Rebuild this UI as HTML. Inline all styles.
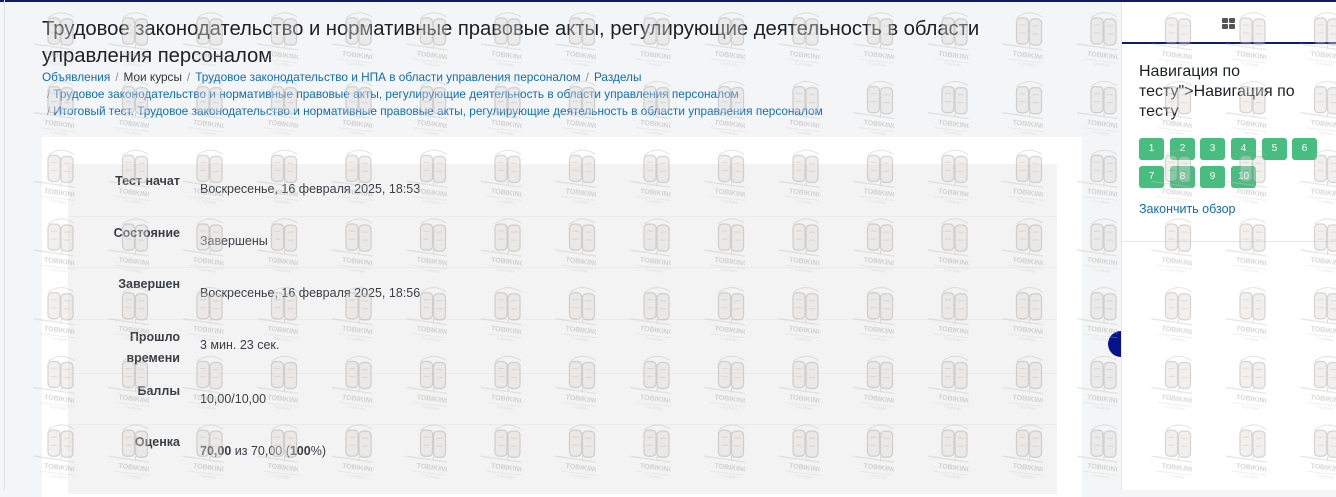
<!DOCTYPE html>
<html><head><meta charset="utf-8">
<style>
*{margin:0;padding:0;box-sizing:border-box}
body{width:1336px;height:490px;overflow:hidden;background:#f4f5f6;font-family:"Liberation Sans","DejaVu Sans",sans-serif;color:#1d2125;position:relative}
.topline{position:absolute;left:0;top:0;width:1336px;height:2px;background:#0f1c6e}
.leftline{position:absolute;left:4px;top:0;width:1px;height:490px;background:#d8e2f0}
h1{position:absolute;left:42px;top:16px;width:1000px;font-size:20.3px;font-weight:normal;line-height:27px;color:#1d2125;letter-spacing:-0.05px}
.bc{position:absolute;left:42px;font-size:11.8px;color:#0f6cbf;white-space:nowrap}
.bc .s{color:#8a8f94;margin:0 5px}
.bc .k{color:#333}
.card{position:absolute;left:42px;top:137px;width:1040px;height:360px;background:#fff}
.inner{position:absolute;left:68px;top:164px;width:989px;height:330px;background:#f3f3f3}
.row{position:absolute;left:68px;width:989px;height:52px;border-top:1px solid #ebebeb}
.lab{position:absolute;width:180px;text-align:right;font-size:12.5px;font-weight:bold;color:#3a3f44;line-height:21px}
.val{position:absolute;left:200px;font-size:12.5px;color:#3a3f44}
.drawer{position:absolute;left:1121px;top:2px;width:215px;height:488px;background:#fff;border-left:1px solid #e3e6ea}
.tabline{position:absolute;left:0;top:40px;width:215px;height:2px;background:#0f1c6e}
.nav{position:absolute;left:17px;top:60px;font-size:16px;line-height:20px;color:#1d2125;width:190px}
.btn{position:absolute;width:25px;height:22px;background:#47bd80;border-radius:3px;color:#fff;font-size:10px;text-align:center;line-height:22px}
.fin{position:absolute;left:17px;top:200px;font-size:12.5px;color:#0f6cbf}
.hr{position:absolute;left:0;top:239px;width:215px;height:1px;background:#e3e6ea}
.circ{position:absolute;left:1108px;top:331px;width:26px;height:26px;border-radius:50%;background:#05148c}
svg.wm{position:absolute;left:0;top:0;pointer-events:none}
</style></head><body>
<div class="topline"></div>
<div class="leftline"></div>
<h1>Трудовое законодательство и нормативные правовые акты, регулирующие деятельность в области управления персоналом</h1>
<div class="bc" style="top:70px">Объявления<span class="s">/</span><span class="k">Мои курсы</span><span class="s">/</span>Трудовое законодательство и НПА в области управления персоналом<span class="s">/</span>Разделы</div>
<div class="bc" style="top:87px;left:47px"><span class="s" style="margin:0 3px 0 0">/</span>Трудовое законодательство и нормативные правовые акты, регулирующие деятельность в области управления персоналом</div>
<div class="bc" style="top:104px;left:47px"><span class="s" style="margin:0 3px 0 0">/</span>Итоговый тест. Трудовое законодательство и нормативные правовые акты, регулирующие деятельность в области управления персоналом</div>

<div class="card"></div>
<div class="inner"></div>
<div class="row" style="top:164px;border-top:none"></div>
<div class="row" style="top:216px"></div>
<div class="row" style="top:267px"></div>
<div class="row" style="top:319px"></div>
<div class="row" style="top:373px"></div>
<div class="row" style="top:424px"></div>

<div class="lab" style="top:171px">Тест начат</div><div class="val" style="top:182px">Воскресенье, 16 февраля 2025, 18:53</div>
<div class="lab" style="top:223px">Состояние</div><div class="val" style="top:234px">Завершены</div>
<div class="lab" style="top:274px">Завершен</div><div class="val" style="top:286px">Воскресенье, 16 февраля 2025, 18:56</div>
<div class="lab" style="top:327px">Прошло<br>времени</div><div class="val" style="top:338px">3 мин. 23 сек.</div>
<div class="lab" style="top:381px">Баллы</div><div class="val" style="top:392px">10,00/10,00</div>
<div class="lab" style="top:432px">Оценка</div><div class="val" style="top:444px"><b>70,00</b> из 70,00 (<b>100</b>%)</div>

<div class="circ"></div>
<div class="drawer">
<svg style="position:absolute;left:100px;top:16px" width="13" height="11"><rect x="0" y="0" width="6" height="5" rx="1" fill="#555"/><rect x="7" y="0" width="6" height="5" rx="1" fill="#555"/><rect x="0" y="6" width="6" height="5" rx="1" fill="#555"/><rect x="7" y="6" width="6" height="5" rx="1" fill="#555"/></svg>
<div class="tabline"></div>
<div class="nav">Навигация по тесту"&gt;Навигация по тесту</div>
<div class="btn" style="left:17px;top:136px">1</div>
<div class="btn" style="left:48px;top:136px">2</div>
<div class="btn" style="left:78px;top:136px">3</div>
<div class="btn" style="left:109px;top:136px">4</div>
<div class="btn" style="left:140px;top:136px">5</div>
<div class="btn" style="left:170px;top:136px">6</div>
<div class="btn" style="left:17px;top:164px">7</div>
<div class="btn" style="left:48px;top:164px">8</div>
<div class="btn" style="left:78px;top:164px">9</div>
<div class="btn" style="left:109px;top:164px">10</div>
<div class="fin">Закончить обзор</div>
<div class="hr"></div>
</div>

<svg class="wm" width="1336" height="490">
<defs>
<pattern id="p" x="0" y="0" width="74.5" height="68.7" patternUnits="userSpaceOnUse">
<g opacity="0.42">
<path d="M48 18 Q60 8 74 17" stroke="#b0adaa" stroke-width="0.8" fill="none"/>
<rect x="48" y="18" width="12" height="26" rx="4" fill="#dedbd8" stroke="#9f9c99" stroke-width="1.3"/>
<rect x="61" y="19" width="12" height="26" rx="4" fill="#dedbd8" stroke="#9f9c99" stroke-width="1.3"/>
<path d="M51 25h6M64 26h6M51 33h6M64 34h6" stroke="#aaa7a4" stroke-width="1"/>
<line x1="61" y1="44" x2="61" y2="49" stroke="#b0adaa" stroke-width="1"/>
<line x1="34" y1="44" x2="82" y2="51" stroke="#c4c2c0" stroke-width="1.3"/>
<text x="44" y="57" font-family="Liberation Sans" font-size="7" font-weight="bold" fill="#a19e9b" transform="rotate(7 55 55)">TOBIKING</text>
<line x1="40" y1="59" x2="75" y2="63" stroke="#cfcdcb" stroke-width="0.8"/>
<text x="50" y="65" font-family="Liberation Serif" font-size="4" fill="#b5b3b1" transform="rotate(7 55 63)">CozyWake</text>
</g>
</pattern>
</defs>
<rect width="1336" height="490" fill="url(#p)"/>
</svg>
</body></html>
